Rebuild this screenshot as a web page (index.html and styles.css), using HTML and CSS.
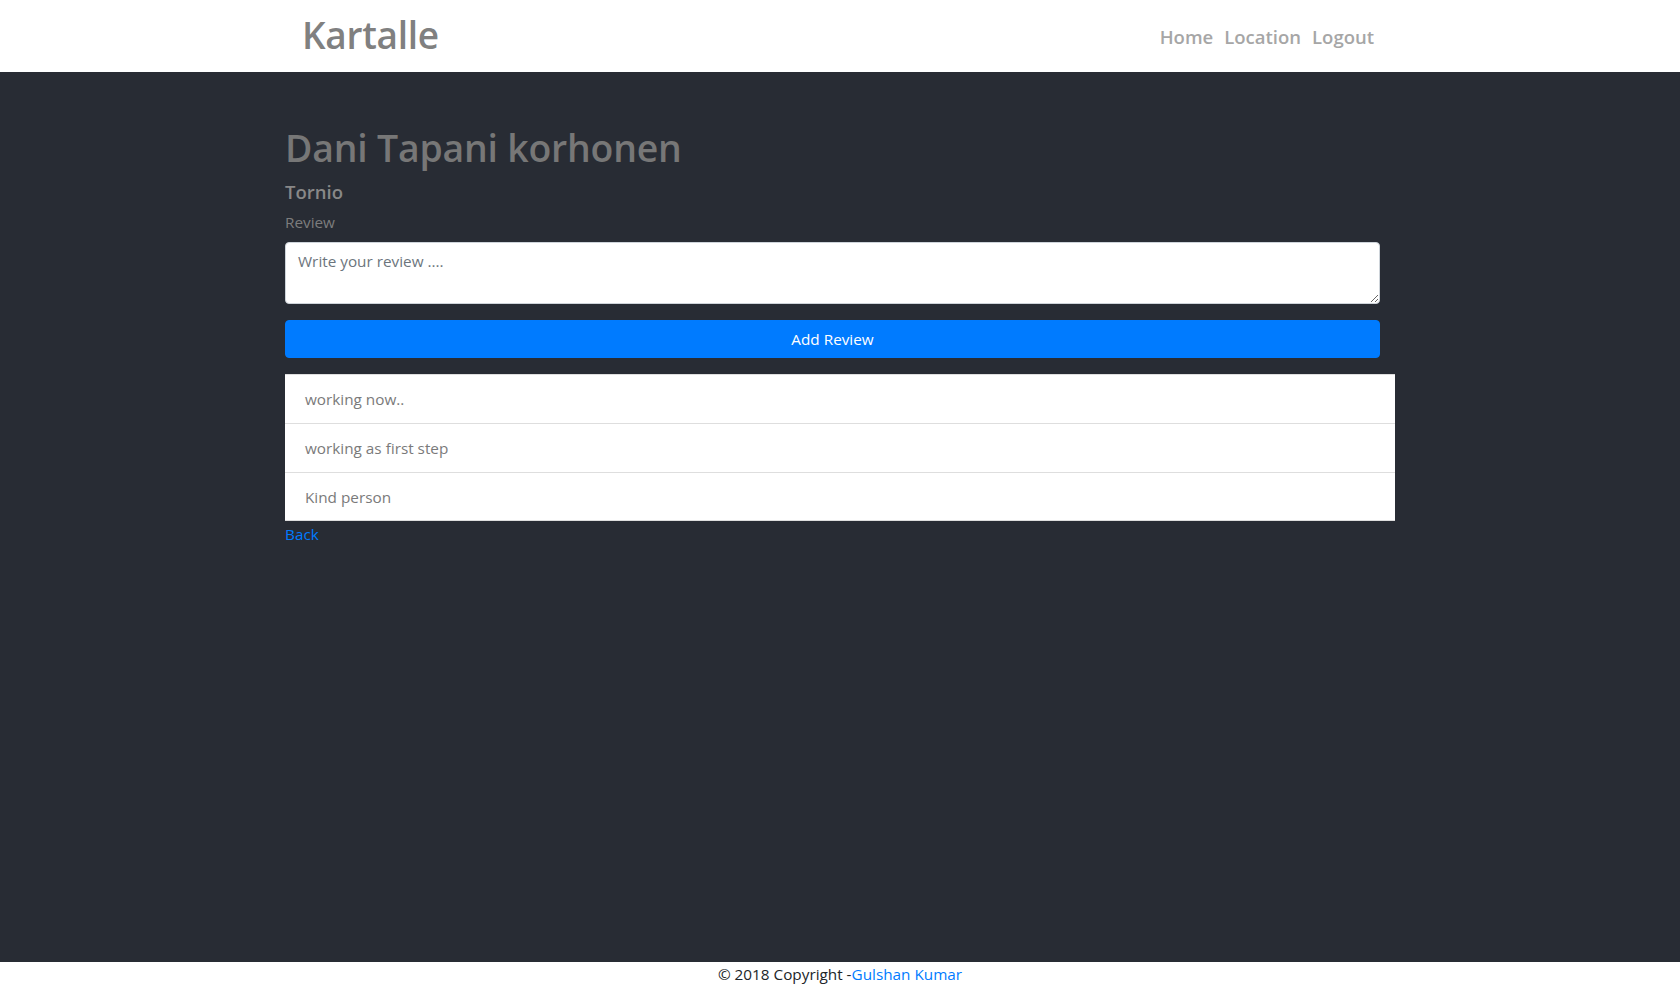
FILE: index.html
```html
<!DOCTYPE html>
<html lang="en">
<head>
<meta charset="utf-8">
<title>Kartalle</title>
<link rel="stylesheet" href="styles.css">
</head>
<body>
<div class="page">
  <header class="topbar">
    <div class="container topbar-inner">
      <a class="brand" href="#">Kartalle</a>
      <nav class="nav">
        <a href="#">Home</a>
        <a href="#">Location</a>
        <a href="#">Logout</a>
      </nav>
    </div>
  </header>
  <main class="main">
    <div class="container">
      <h1 class="title">Dani Tapani korhonen</h1>
      <h5 class="city">Tornio</h5>
      <form class="review-form">
        <label class="label">Review</label>
        <textarea class="textarea" placeholder="Write your review ...."></textarea>
        <button type="button" class="btn">Add Review</button>
      </form>
      <ul class="list">
        <li>working now..</li>
        <li>working as first step</li>
        <li>Kind person</li>
      </ul>
      <a class="back" href="#">Back</a>
    </div>
  </main>
  <footer class="footer">© 2018 Copyright -<a href="#">Gulshan Kumar</a></footer>
</div>
</body>
</html>
```
FILE: styles.css
```css
* { box-sizing: border-box; }
html, body { margin: 0; padding: 0; height: 100%; }
body {
  font-family: "Open Sans", "Noto Sans", sans-serif;
  font-size: 15.3px;
  color: #212529;
  background: #282c34;
}
.page { display: flex; flex-direction: column; min-height: 986px; }
.container { width: 1140px; margin: 0 auto; padding: 0 15px; }
.topbar { background: #fff; height: 72px; }
.topbar-inner { display: flex; align-items: center; justify-content: space-between; height: 72px; }
.brand {
  color: #808080; text-decoration: none; font-size: 37px; font-weight: 600;
  margin-left: 17px; letter-spacing: -0.3px; margin-top: -4px;
}
.nav { display: flex; gap: 11px; margin-right: 21px; margin-top: 1px; }
.nav a { color: #a6a6a6; text-decoration: none; font-size: 18.5px; font-weight: 600; }
.main { flex: 1; }
.title {
  margin: 52px 0 0; font-size: 37.4px; font-weight: 600; color: #777; line-height: 48px; letter-spacing: -0.2px;
}
.city { margin: 8px 0 0; font-size: 18.5px; font-weight: 600; color: #888; line-height: 24px; }
.review-form { margin-right: 15px; }
.label { display: block; margin-top: 7px; font-size: 15.3px; color: #7d7d7d; line-height: 22px; }
.textarea {
  display: block; width: 100%; height: 62px; margin-top: 9px;
  border: 1px solid #ced4da; border-radius: 4px; padding: 8px 12px;
  font-family: inherit; font-size: 15.3px; color: #495057; background: #fff;
}
.textarea::placeholder { color: #6c757d; }
.btn {
  display: block; width: 100%; height: 38px; margin-top: 16px;
  background: #007bff; color: #fff; border: 1px solid #007bff; border-radius: 4px;
  font-family: inherit; font-size: 15.3px; cursor: pointer;
}
.list { list-style: none; margin: 16px 0 0; padding: 0; background: #fff; }
.list li {
  height: 49px; padding: 0 20px; display: flex; align-items: center;
  border-top: 1px solid #dedede; color: #7a7a7a; font-size: 15.3px;
}
.list li:last-child { border-bottom: 1px solid #dedede; }
.back { display: inline-block; color: #007bff; text-decoration: none; font-size: 15.3px; margin-top: 3px; }
.footer {
  background: #fff; height: 24px; text-align: center; font-size: 15.3px; color: #212529; line-height: 24px;
}
.footer a { color: #007bff; text-decoration: none; }
```
